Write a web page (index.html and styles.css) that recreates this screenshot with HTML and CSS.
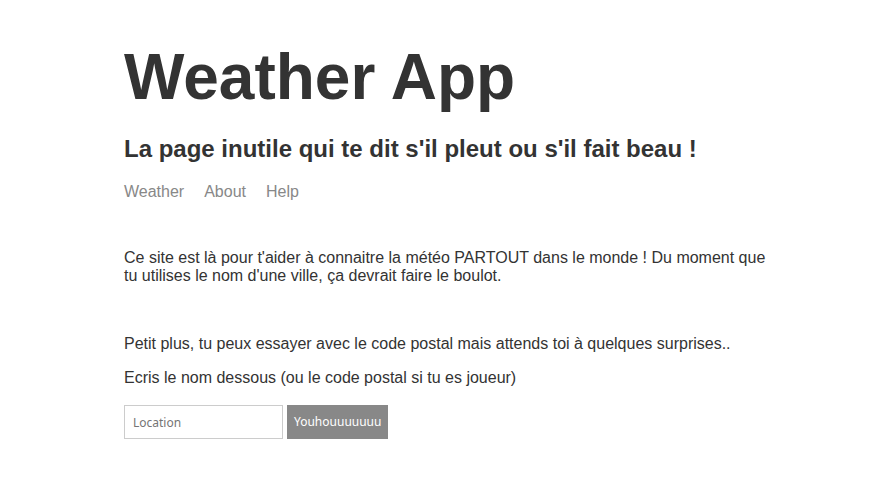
FILE: index.html
```html
<!DOCTYPE html>
<html lang="fr">
<head>
<meta charset="utf-8">
<title>Weather App</title>
<link rel="stylesheet" href="styles.css">
</head>
<body>
<div class="main-content">
<header>
<h1>Weather App</h1>
<h2>La page inutile qui te dit s'il pleut ou s'il fait beau !</h2>
<nav>
<a href="#weather">Weather</a>
<a href="#about">About</a>
<a href="#help">Help</a>
</nav>
</header>
<main>
<p class="intro">Ce site est là pour t'aider à connaitre la météo PARTOUT dans le monde ! Du moment que tu utilises le nom d'une ville, ça devrait faire le boulot.</p>
<p>Petit plus, tu peux essayer avec le code postal mais attends toi à quelques surprises..</p>
<p><label for="location">Ecris le nom dessous (ou le code postal si tu es joueur)</label></p>
<form>
<input id="location" type="text" placeholder="Location">
<button type="submit">Youhouuuuuuu</button>
</form>
</main>
</div>
</body>
</html>
```

FILE: styles.css
```css
* {
  box-sizing: border-box;
}

body {
  margin: 0;
  padding: 32px;
  color: #333;
  background: #fff;
  font: 16px/18px "Liberation Sans", Arial, sans-serif;
}

.main-content {
  max-width: 650px;
  margin: 0 auto;
  padding-left: 6px;
}

h1 {
  margin: 0 0 13px;
  font-size: 64px;
  line-height: 90px;
}

h2 {
  margin: 0 0 20px;
  font-size: 24px;
  line-height: 28px;
}

nav {
  display: flex;
  gap: 20px;
}

nav a {
  color: #888;
  text-decoration: none;
}

main {
  margin-top: 48px;
}

p {
  margin: 0 0 16px;
}

.intro {
  margin-bottom: 50px;
}

form {
  display: flex;
  gap: 4px;
  margin-top: 18px;
}

input,
button {
  padding: 8px;
  height: 34px;
  font: 12px/16px "Noto Sans", sans-serif;
}

input {
  width: 159px;
  border: 1px solid #ccc;
}

button {
  padding: 8px 7px;
  border: 0;
  color: #fff;
  background: #888;
}
```
